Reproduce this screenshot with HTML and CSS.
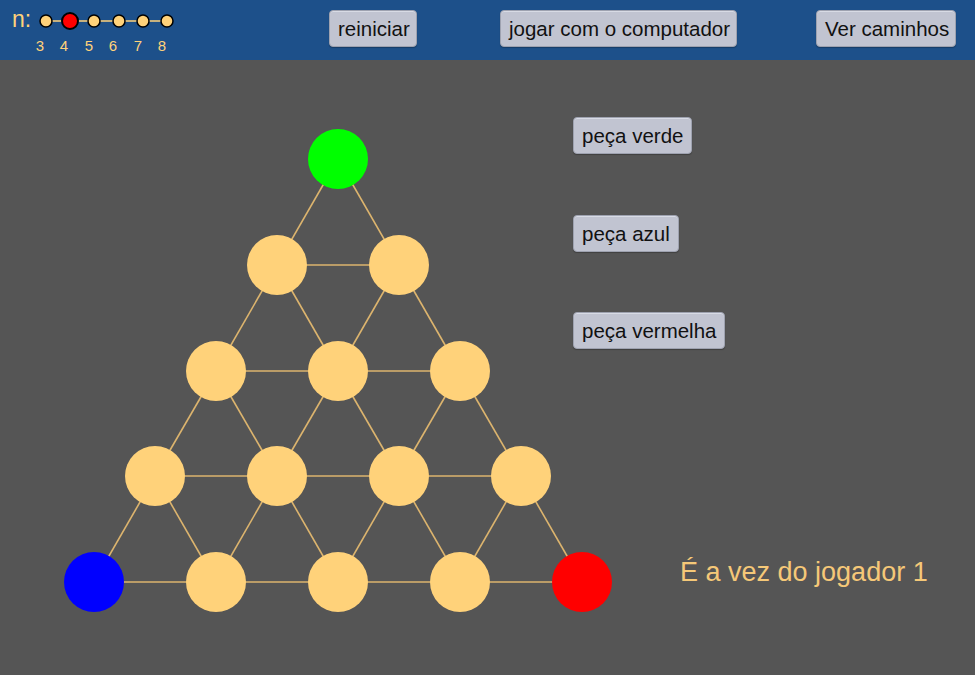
FILE: index.html
```html
<!DOCTYPE html>
<html lang="pt">
<head>
<meta charset="utf-8">
<title>Jogo</title>
<link rel="stylesheet" href="styles.css">
</head>
<body>
<header class="topbar">
  <svg class="slider" width="180" height="60" viewBox="0 0 180 60">
    <text x="12" y="27" class="slider-label">n:</text>
    <line x1="46" y1="21" x2="167" y2="21" class="slider-line"/>
    <circle cx="46" cy="21" r="6" class="dot"/>
    <circle cx="94" cy="21" r="6" class="dot"/>
    <circle cx="119" cy="21" r="6" class="dot"/>
    <circle cx="143" cy="21" r="6" class="dot"/>
    <circle cx="167" cy="21" r="6" class="dot"/>
    <circle cx="70" cy="21" r="8" class="dot dot-on"/>
    <text x="40" y="51" class="tick">3</text>
    <text x="64" y="51" class="tick">4</text>
    <text x="89" y="51" class="tick">5</text>
    <text x="113" y="51" class="tick">6</text>
    <text x="138" y="51" class="tick">7</text>
    <text x="162" y="51" class="tick">8</text>
  </svg>
  <button class="btn btn-reset">reiniciar</button>
  <button class="btn btn-cpu">jogar com o computador</button>
  <button class="btn btn-paths">Ver caminhos</button>
</header>
<main class="stage">
  <svg class="board" width="573" height="615" viewBox="0 60 573 615">
    <g class="edges">
      <line x1="338" y1="159" x2="277" y2="265"/><line x1="338" y1="159" x2="399" y2="265"/>
      <line x1="277" y1="265" x2="399" y2="265"/>
      <line x1="277" y1="265" x2="216" y2="371"/><line x1="277" y1="265" x2="338" y2="371"/>
      <line x1="399" y1="265" x2="338" y2="371"/><line x1="399" y1="265" x2="460" y2="371"/>
      <line x1="216" y1="371" x2="460" y2="371"/>
      <line x1="216" y1="371" x2="155" y2="476"/><line x1="216" y1="371" x2="277" y2="476"/>
      <line x1="338" y1="371" x2="277" y2="476"/><line x1="338" y1="371" x2="399" y2="476"/>
      <line x1="460" y1="371" x2="399" y2="476"/><line x1="460" y1="371" x2="521" y2="476"/>
      <line x1="155" y1="476" x2="521" y2="476"/>
      <line x1="155" y1="476" x2="94" y2="582"/><line x1="155" y1="476" x2="216" y2="582"/>
      <line x1="277" y1="476" x2="216" y2="582"/><line x1="277" y1="476" x2="338" y2="582"/>
      <line x1="399" y1="476" x2="338" y2="582"/><line x1="399" y1="476" x2="460" y2="582"/>
      <line x1="521" y1="476" x2="460" y2="582"/><line x1="521" y1="476" x2="582" y2="582"/>
      <line x1="94" y1="582" x2="582" y2="582"/>
    </g>
    <g class="nodes">
      <circle cx="277" cy="265" r="30"/><circle cx="399" cy="265" r="30"/>
      <circle cx="216" cy="371" r="30"/><circle cx="338" cy="371" r="30"/><circle cx="460" cy="371" r="30"/>
      <circle cx="155" cy="476" r="30"/><circle cx="277" cy="476" r="30"/><circle cx="399" cy="476" r="30"/><circle cx="521" cy="476" r="30"/>
      <circle cx="216" cy="582" r="30"/><circle cx="338" cy="582" r="30"/><circle cx="460" cy="582" r="30"/>
      <circle cx="338" cy="159" r="30" class="green"/>
      <circle cx="94" cy="582" r="30" class="blue"/>
      <circle cx="582" cy="582" r="30" class="red"/>
    </g>
  </svg>
  <div class="side">
    <button class="btn">peça verde</button>
    <button class="btn">peça azul</button>
    <button class="btn">peça vermelha</button>
    <p class="status">É a vez do jogador 1</p>
  </div>
</main>
</body>
</html>
```
FILE: styles.css
```css
html, body {
  margin: 0;
  padding: 0;
}
body {
  width: 975px;
  height: 675px;
  overflow: hidden;
  background: #555555;
  font-family: "Liberation Sans", Arial, sans-serif;
}
.topbar {
  height: 60px;
  background: #1d508a;
  display: flex;
  align-items: flex-start;
  box-sizing: border-box;
  padding-top: 10px;
}
.slider {
  display: block;
  margin-top: -10px;
  flex: none;
}
.slider-label {
  font-family: "Liberation Sans", Arial, sans-serif;
  font-size: 23px;
  fill: #ffd27a;
}
.slider-line {
  stroke: #ffd27a;
  stroke-width: 1.5;
}
.dot {
  fill: #ffd27a;
  stroke: #000;
  stroke-width: 1.5;
}
.dot-on {
  fill: #ff0000;
  stroke-width: 2;
}
.tick {
  font-family: "Liberation Sans", Arial, sans-serif;
  font-size: 15px;
  fill: #ffd27a;
  text-anchor: middle;
}
.btn {
  font-family: "Liberation Sans", Arial, sans-serif;
  font-size: 20.5px;
  color: #111;
  background: #c1c4d1;
  border: 1px solid #9ea2b0;
  border-radius: 4px;
  box-shadow: inset 0 1px 0 #d8dbe5, 0 1px 1px rgba(0,0,0,0.25);
  height: 37px;
  padding: 0 8px;
  line-height: 35px;
  box-sizing: border-box;
  flex: none;
  cursor: pointer;
  white-space: nowrap;
}
.btn-reset { margin-left: 149px; width: 88px; }
.btn-cpu { margin-left: 83px; width: 237px; }
.btn-paths { margin-left: 79px; width: 140px; }
.stage {
  display: flex;
  height: 615px;
}
.board {
  display: block;
  flex: none;
  overflow: visible;
}
.edges line {
  stroke: #dcb46e;
  stroke-width: 1.6;
}
.nodes circle {
  fill: #ffd27a;
}
.nodes .green { fill: #00ff00; }
.nodes .blue { fill: #0000ff; }
.nodes .red { fill: #ff0000; }
.side {
  display: flex;
  flex-direction: column;
  align-items: flex-start;
  padding-top: 57px;
  gap: 61px;
}
.side .btn:nth-child(3) { margin-top: -1px; }
.status {
  margin: 146px 0 0 107px;
  font-family: "Liberation Sans", Arial, sans-serif;
  font-size: 27px;
  line-height: 32px;
  color: #f5c878;
  white-space: nowrap;
}
```
